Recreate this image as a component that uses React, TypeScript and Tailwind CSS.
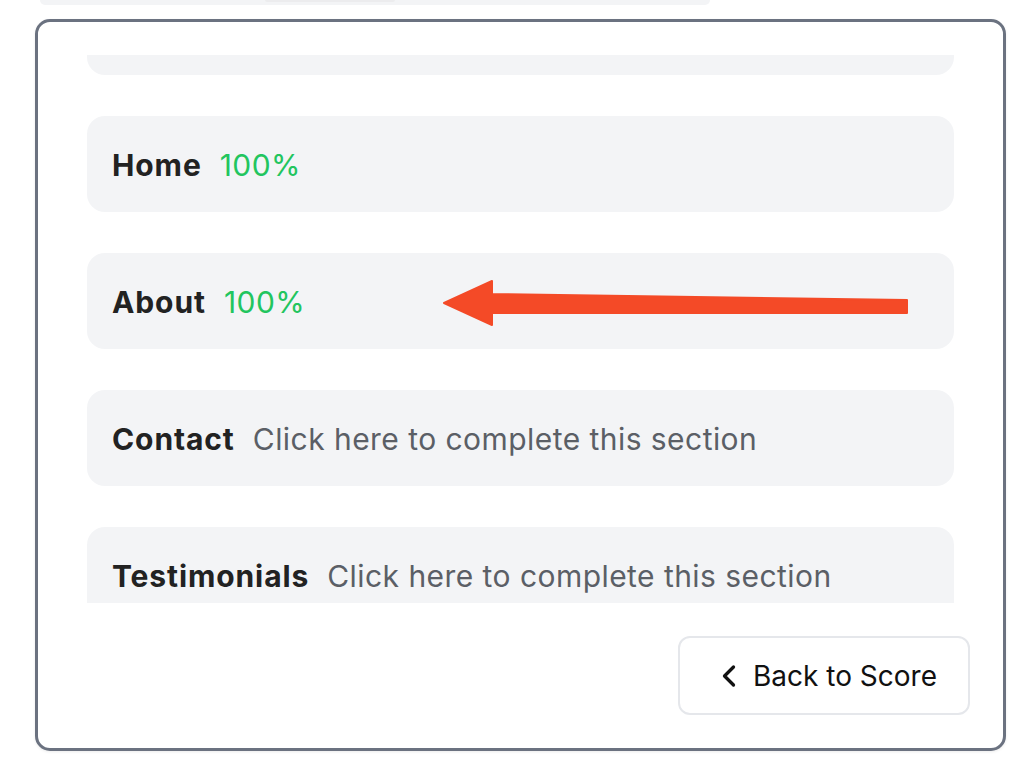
import React from 'react';
import { ChevronLeft } from 'lucide-react';

type Section = { name: string; score?: number };

const sections: Section[] = [
  { name: 'Home', score: 100 },
  { name: 'About', score: 100 },
  { name: 'Contact' },
  { name: 'Testimonials' },
];

function SectionRow({ section }: { section: Section }) {
  return (
    <div className="flex h-[96px] shrink-0 items-center gap-[18px] rounded-[18px] bg-[#f3f4f6] px-[25px] pt-[2px] text-[30px] tracking-[0.015em]">
      <span className="font-bold tracking-[0.03em] text-[#222]">{section.name}</span>
      {section.score !== undefined ? (
        <span className="text-[#22c55e]">{section.score}%</span>
      ) : (
        <span className="text-[#5b5f66]">Click here to complete this section</span>
      )}
    </div>
  );
}

function Arrow() {
  return (
    <svg
      className="pointer-events-none absolute left-[440px] top-[276px]"
      width="472"
      height="54"
      viewBox="0 0 472 54"
    >
      <polygon
        points="4,27 52,5 52,18 467,24 467,37 52,37 52,49"
        fill="#f44a27"
        stroke="#f44a27"
        strokeLinejoin="round"
        strokeWidth="2"
      />
    </svg>
  );
}

export default function App() {
  return (
    <div
      className="relative h-[770px] w-[1026px] overflow-hidden bg-white"
      style={{ fontFamily: 'Inter, "Noto Sans", sans-serif' }}
    >
      {/* previous panel peeking at the top */}
      <div className="mx-[40px] flex h-[5px] w-[670px] justify-center rounded-b-[12px] bg-[#f3f4f6]">
        <div className="ml-[-90px] h-[2px] w-[130px] rounded-b-[6px] bg-[#ececee]" />
      </div>

      <div className="ml-[35px] mt-[14px] flex h-[732px] w-[971px] flex-col rounded-[15px] border-[3px] border-[#6b7280] bg-white px-[33px] pb-[33px] pt-[33px] shadow-[0_1px_3px_rgba(0,0,0,0.08)]">
        <div className="h-[548px] overflow-hidden px-[16px]">
          <div className="-mt-[76px] flex flex-col gap-[41px]">
            {/* row scrolled mostly out of view */}
            <div className="h-[96px] shrink-0 rounded-[18px] bg-[#f3f4f6]" />
            {sections.map((s) => (
              <SectionRow key={s.name} section={s} />
            ))}
          </div>
        </div>

        <div className="mt-[33px] flex justify-end">
          <button className="flex h-[79px] w-[292px] items-center justify-center gap-[6px] rounded-[12px] border-2 border-[#e5e7eb] bg-white text-[28px] text-[#111]">
            <ChevronLeft className="h-[36px] w-[36px]" strokeWidth={2.2} />
            Back to Score
          </button>
        </div>
      </div>

      <Arrow />
    </div>
  );
}
